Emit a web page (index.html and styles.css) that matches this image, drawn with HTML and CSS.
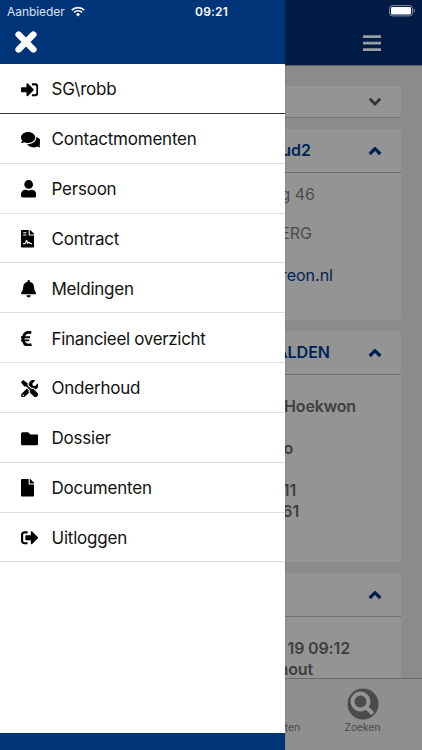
FILE: index.html
```
<!DOCTYPE html>
<html lang="nl">
<head>
<meta charset="utf-8">
<title>Aanbieder</title>
<link rel="stylesheet" href="styles.css">
</head>
<body>
<div class="screen">
  <div class="page">
    <header class="topbar">
      <svg class="burger" viewBox="0 0 18 17"><path d="M0 1.6h18M0 8.1h18M0 14.6h18"/></svg>
    </header>
    <main class="content">
      <section class="card select"><svg class="chevron down" viewBox="0 0 14 9"><path d="M1.7 1.7 7 7l5.3-5.3"/></svg></section>
      <section class="card contact">
        <h2 class="card-head"><span class="t-name">ud2</span><svg class="chevron" viewBox="0 0 14 9"><path d="M1.7 7 7 1.7 12.300 7"/></svg></h2>
        <p class="line street">g 46</p>
        <p class="line city">ERG</p>
        <p class="line mail">reon.nl</p>
      </section>
      <section class="card people">
        <h2 class="card-head"><span class="t-caps">ALDEN</span><svg class="chevron" viewBox="0 0 14 9"><path d="M1.7 7 7 1.7 12.300 7"/></svg></h2>
        <p class="line strong p1">Hoekwon</p>
        <p class="line strong p2">o</p>
        <p class="line strong p3">11</p>
        <p class="line strong p4">61</p>
      </section>
      <section class="card agenda">
        <h2 class="card-head"><span></span><svg class="chevron" viewBox="0 0 14 9"><path d="M1.7 7 7 1.7 12.300 7"/></svg></h2>
        <p class="line strong a1">19 09:12</p>
        <p class="line strong a2">hout</p>
      </section>
    </main>
    <nav class="tabs">
      <div class="tab cut"><span>ten</span></div>
      <div class="tab search">
        <svg viewBox="0 0 32 32"><circle cx="16" cy="16" r="15.5" fill="#4b4b4d"/><circle cx="13.500" cy="13.500" r="8" fill="none" stroke="#949494" stroke-width="4"/><path d="m19.500 19.500 6.300 6.300" stroke="#949494" stroke-width="4.200"/></svg>
        <span>Zoeken</span>
      </div>
    </nav>
  </div>
  <aside class="drawer">
    <div class="drawer-head"><svg class="close" viewBox="0 0 22 22"><path d="m3.600 3.600 14.800 14.800m0-14.800-14.800 14.800"/></svg></div>
    <ul class="menu">
      <li class="first"><svg viewBox="0 0 512 512"><path d="M416 448h-84c-6.600 0-12-5.400-12-12v-40c0-6.600 5.400-12 12-12h84c17.700 0 32-14.300 32-32V160c0-17.700-14.300-32-32-32h-84c-6.600 0-12-5.400-12-12V76c0-6.600 5.400-12 12-12h84c53 0 96 43 96 96v192c0 53-43 96-96 96zm-47-209L201 71c-15-15-41-4.500-41 17v96H24c-13.300 0-24 10.700-24 24v96c0 13.300 10.700 24 24 24h136v96c0 21.500 26 32 41 17l168-168c9.300-9.400 9.300-24.600 0-34z"/></svg><span>SG\robb</span></li>
      <li><svg class="wide" viewBox="0 0 576 512"><path d="M416 192c0-88.400-93.100-160-208-160S0 103.600 0 192c0 34.300 14.100 65.900 38 92-13.400 30.200-35.500 54.200-35.800 54.500-2.200 2.300-2.800 5.700-1.500 8.700S4.800 352 8 352c36.600 0 66.900-12.300 88.700-25 32.200 15.700 70.300 25 111.300 25 114.900 0 208-71.600 208-160zm122 220c23.900-26 38-57.700 38-92 0-66.900-53.500-124.200-129.300-148.100.9 6.600 1.300 13.300 1.300 20.100 0 105.900-107.700 192-240 192-10.800 0-21.300-.8-31.700-1.900C207.800 439.600 281.800 480 368 480c41 0 79.100-9.200 111.300-25 21.800 12.700 52.100 25 88.700 25 3.200 0 6.100-1.900 7.300-4.800 1.300-2.900.7-6.300-1.500-8.700-.3-.3-22.400-24.200-35.800-54.500z"/></svg><span>Contactmomenten</span></li>
      <li><svg class="mid" viewBox="0 0 448 512"><path d="M224 256c70.700 0 128-57.300 128-128S294.700 0 224 0 96 57.300 96 128s57.300 128 128 128zm89.600 32h-16.700c-22.200 10.200-46.900 16-72.900 16s-50.600-5.800-72.900-16h-16.700C60.200 288 0 348.200 0 422.400V464c0 26.500 21.500 48 48 48h352c26.500 0 48-21.500 48-48v-41.600c0-74.200-60.200-134.400-134.400-134.400z"/></svg><span>Persoon</span></li>
      <li><svg class="thin" viewBox="0 0 384 512"><path fill-rule="evenodd" d="M24 0h200v136c0 13.200 10.800 24 24 24h136v328c0 13.300-10.700 24-24 24H24c-13.300 0-24-10.700-24-24V24C0 10.700 10.700 0 24 0zm40 64v32h96V64zm0 64v32h96v-32zm0 288h42c18 0 34-11 40-29l14-43 26 60c6 12 23 12 29 1l8-17c6-12 18-8 24 2 10 17 28 26 48 26h25v-32h-25c-8 0-16-4-20-12-14-28-48-32-70-14l-22-56c-7-17-31-17-38 0l-29 75c-2 4-6 7-10 7H64zM256 0h6c7 0 12 3 17 7l98 98c5 5 7 10 7 17v6H256z"/></svg><span>Contract</span></li>
      <li><svg class="mid" viewBox="0 0 448 512"><path d="M224 512c35.300 0 63.900-28.700 63.900-64H160.100c0 35.300 28.600 64 63.900 64zm215.400-149.700c-19.300-20.800-55.500-52-55.500-154.300 0-77.700-54.500-139.900-127.900-155.200V32c0-17.700-14.300-32-32-32s-32 14.300-32 32v20.800C118.600 68.100 64.100 130.300 64.100 208c0 102.300-36.200 133.500-55.500 154.300-6 6.400-8.700 14.100-8.600 21.700.1 16.400 13 32 32.100 32h383.800c19.100 0 32-15.600 32.100-32 .1-7.600-2.600-15.300-8.600-21.700z"/></svg><span>Meldingen</span></li>
      <li><svg class="euro" viewBox="0 0 320 448"><path d="M298 52c-90-30-192-15-222 97-21 74-21 112 1 163 34 100 132 114 228 84" fill="none" stroke="#000" stroke-width="80"/><path d="M0 156h262v56H0zM0 244h240v56H0z"/></svg><span class="tight">Financieel overzicht</span></li>
      <li><svg viewBox="0 0 512 512"><path d="M501.100 395.700 384 278.600c-23.100-23.100-57.600-27.600-85.400-13.900L192 158.100V96L64 0 0 64l96 128h62.100l106.600 106.600c-13.600 27.800-9.200 62.300 13.900 85.400l117.100 117.100c14.600 14.600 38.200 14.600 52.700 0l52.700-52.700c14.500-14.600 14.500-38.200 0-52.700zM331.700 225c28.300 0 54.900 11 74.900 31l19.400 19.400c15.800-6.900 30.800-16.500 43.800-29.500 37.100-37.100 49.700-89.300 37.900-136.700-2.200-9-13.500-12.100-20.100-5.500l-74.400 74.400-67.900-11.300L334 98.900l74.400-74.400c6.600-6.600 3.400-17.900-5.700-20.200-47.400-11.700-99.600.9-136.600 37.900-28.500 28.500-41.900 66.100-41.200 103.600l82.100 82.100c8.100-1.900 16.500-2.900 24.700-2.900zm-103.900 82-56.700-56.700L18.700 402.800c-25 25-25 65.500 0 90.500s65.500 25 90.500 0l123.600-123.600c-7.600-19.900-9.900-41.600-5-62.700zM64 472c-13.200 0-24-10.800-24-24 0-13.300 10.700-24 24-24s24 10.700 24 24c0 13.200-10.700 24-24 24z"/></svg><span>Onderhoud</span></li>
      <li><svg viewBox="0 0 512 512"><path d="M464 128H272l-64-64H48C21.500 64 0 85.500 0 112v288c0 26.500 21.500 48 48 48h416c26.500 0 48-21.500 48-48V176c0-26.500-21.500-48-48-48z"/></svg><span>Dossier</span></li>
      <li><svg class="thin" viewBox="0 0 384 512"><path d="M224 136V0H24C10.700 0 0 10.700 0 24v464c0 13.300 10.700 24 24 24h336c13.300 0 24-10.700 24-24V160H248c-13.200 0-24-10.800-24-24zm160-14.100v6.100H256V0h6.100c6.400 0 12.500 2.500 17 7l97.900 98c4.500 4.500 7 10.600 7 16.900z"/></svg><span>Documenten</span></li>
      <li><svg viewBox="0 0 512 512"><path d="m497 273-168 168c-15 15-41 4.500-41-17v-96H152c-13.300 0-24-10.700-24-24v-96c0-13.300 10.700-24 24-24h136V88c0-21.400 25.900-32 41-17l168 168c9.300 9.400 9.300 24.600 0 34zM192 436v-40c0-6.600-5.400-12-12-12H96c-17.700 0-32-14.300-32-32V160c0-17.700 14.300-32 32-32h84c6.600 0 12-5.400 12-12V76c0-6.600-5.400-12-12-12H96c-53 0-96 43-96 96v192c0 53 43 96 96 96h84c6.600 0 12-5.400 12-12z"/></svg><span>Uitloggen</span></li>
    </ul>
    <div class="drawer-foot"></div>
  </aside>
  <div class="status">
    <div class="carrier"><span>Aanbieder</span><svg viewBox="0 0 14 11"><path d="M.8 4.100a8.800 8.800 0 0 1 12.400 0M3 6.400a5.700 5.700 0 0 1 8 0" fill="none" stroke="#fff" stroke-width="1.700"/><path d="M4.900 8.300a3 3 0 0 1 4.200 0L7 10.500z" fill="#fff"/></svg></div>
    <time>09:21</time>
    <svg class="battery" viewBox="0 0 27 12"><rect x=".6" y=".6" width="22.800" height="10.300" rx="2.600" fill="none" stroke="#7f8da3"/><rect x="2" y="2" width="20" height="7.500" rx="1.200" fill="#fff"/><path d="M24.700 3.800c1.800.6 1.800 3.300 0 3.900z" fill="#7f8da3"/></svg>
  </div>
</div>
</body>
</html>
```
FILE: styles.css
```
* { box-sizing: border-box; }
body { margin: 0; font-family: Inter, "Liberation Sans", sans-serif; }
p, h2, ul { margin: 0; padding: 0; }
svg { display: block; flex: none; }

.screen { position: relative; width: 422px; height: 750px; overflow: hidden; }

.page { display: flex; flex-direction: column; height: 750px; background: #8b8b8b; }
.topbar { flex: none; height: 66px; padding: 35px 41px 0 0; display: flex; justify-content: flex-end; background: #001c45; border-bottom: 1px solid #59616d; }
.burger { width: 18px; height: 17px; fill: none; stroke: #999da5; stroke-width: 2.6; }
.content { flex: 1; min-height: 0; overflow: hidden; padding: 20px 21px 0 0; }
.card { background: #949494; border-radius: 0 3px 3px 0; }
.select { height: 32px; margin-bottom: 11px; padding: 11px 19px 0 0; display: flex; justify-content: flex-end; border-bottom: 1px solid #777; }
.chevron { width: 14px; height: 9px; margin-top: 1px; fill: none; stroke: #001f50; stroke-width: 3.2; }
.chevron.down { margin-top: 0; stroke: #333; stroke-width: 2.7; }
.card-head { height: 44px; padding: 0 19px 0 0; display: flex; align-items: center; justify-content: space-between; border-bottom: 1px solid #707070; font-size: 16px; font-weight: 600; color: #002355; }
.card-head span { flex: 1; padding-bottom: 2px; text-align: right; }
.t-name { margin-right: 57px; }
.t-caps { margin-right: 38px; }
.contact { height: 191px; margin-bottom: 11px; }
.people { height: 231px; margin-bottom: 11px; }
.agenda { height: 180px; }
.line { height: 21px; line-height: 21px; font-size: 16px; text-align: right; color: #4c4c4c; }
.strong { font-weight: 600; color: #3f3f3f; letter-spacing: -.15px; }
.street { margin-top: 11px; padding-right: 86px; }
.city { margin-top: 18px; padding-right: 89px; }
.mail { margin-top: 21px; padding-right: 68px; color: #002355; }
.p1 { margin-top: 21px; padding-right: 45px; }
.p2 { margin-top: 21px; padding-right: 108px; }
.p3 { margin-top: 21px; padding-right: 105px; }
.p4 { padding-right: 102px; }
.a1 { margin-top: 21px; padding-right: 51px; }
.a2 { padding-right: 88px; }

.tabs { flex: none; height: 72px; display: flex; background: #8f8f8f; border-top: 1px solid #6c6c6c; font-size: 10.3px; line-height: 12px; color: #48484a; }
.tab { padding-top: 9px; }
.cut { flex: none; width: 300px; padding-top: 42px; text-align: right; }
.search { flex: none; width: 125px; display: flex; flex-direction: column; align-items: center; gap: 1px; }
.search svg { width: 32px; height: 32px; }

.drawer { position: absolute; left: 0; top: 0; width: 285px; height: 750px; display: flex; flex-direction: column; background: #fff; box-shadow: 0 0 1px rgba(0, 0, 0, .4); }
.drawer-head { height: 64px; padding: 31px 0 0 15px; background: #003478; }
.close { width: 22px; height: 22px; fill: none; stroke: #fff; stroke-width: 6.4; stroke-linecap: round; }
.menu { flex: 1; list-style: none; }
.menu li { height: 49.85px; padding: 2px 0 0 20.5px; display: flex; align-items: center; border-bottom: 1px solid #dedede; font-size: 17px; letter-spacing: -.22px; color: #111; }
.menu li.first { border-bottom-color: #333; }
.menu .tight { letter-spacing: -.33px; }
.menu svg { width: 17.5px; height: 17.5px; margin-right: 13.5px; fill: #000; }
.menu svg.wide { width: 19.700px; margin-right: 11.300px; }
.menu svg.mid { width: 15.300px; margin-right: 15.700px; }
.menu svg.thin { width: 13.100px; margin-right: 17.900px; }
.menu svg.euro { width: 11px; height: 15.4px; margin-right: 20px; }
.drawer-foot { height: 17px; background: #003478; }

.status { position: absolute; left: 0; top: 0; width: 422px; height: 22px; display: grid; grid-template-columns: 1fr auto 1fr; align-items: center; padding: 0 6px 0 7px; font-size: 12px; color: #fff; }
.carrier { display: flex; align-items: center; gap: 6px; color: #dce4ef; }
.carrier svg { width: 14px; height: 11px; }
.carrier span { letter-spacing: -.05px; }
.status time { font-weight: 600; letter-spacing: .2px; }
.battery { width: 27px; height: 12px; justify-self: end; }
```
